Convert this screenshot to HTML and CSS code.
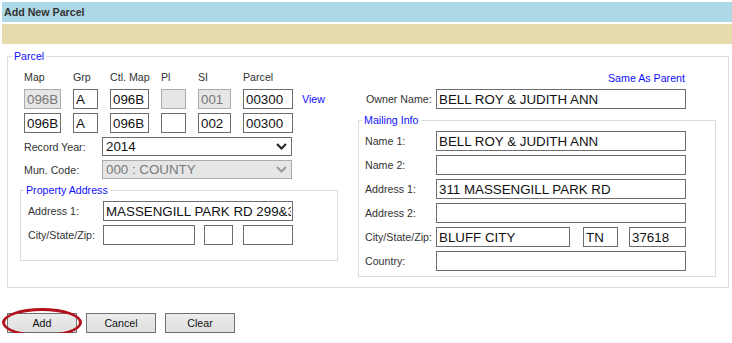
FILE: index.html
```html
<!DOCTYPE html>
<html>
<head>
<meta charset="utf-8">
<link rel="stylesheet" href="styles.css">
</head>
<body>
<div class="title">Add New Parcel</div>
<div class="band"></div>
<fieldset class="parcel">
  <legend>Parcel</legend>
  <div class="cols">
    <div class="left">
      <div class="idgrid">
        <span class="hd">Map</span><span class="hd">Grp</span><span class="hd">Ctl. Map</span><span class="hd">Pl</span><span class="hd">SI</span><span class="hd">Parcel</span><span></span>
        <input class="inp dis w-map" value="096B" disabled>
        <input class="inp w-grp" value="A">
        <input class="inp w-ctl" value="096B">
        <input class="inp dis w-pl" value="" disabled>
        <input class="inp dis w-si" value="001" disabled>
        <input class="inp w-par" value="00300">
        <a class="link view">View</a>
        <input class="inp w-map" value="096B">
        <input class="inp w-grp" value="A">
        <input class="inp w-ctl" value="096B">
        <input class="inp w-pl" value="">
        <input class="inp w-si" value="002">
        <input class="inp w-par" value="00300">
        <span></span>
      </div>
      <div class="srow first">
        <span class="lbl w78">Record Year:</span>
        <div class="sel">
          <select class="select"><option>2014</option></select>
          <svg class="chev" width="11" height="7" viewBox="0 0 11 7"><path d="M1 1 L5.5 5.5 L10 1" fill="none" stroke="#222" stroke-width="2"/></svg>
        </div>
      </div>
      <div class="srow">
        <span class="lbl w78">Mun. Code:</span>
        <div class="sel">
          <select class="select dis" disabled><option>000 : COUNTY</option></select>
          <svg class="chev" width="11" height="7" viewBox="0 0 11 7"><path d="M1 1 L5.5 5.5 L10 1" fill="none" stroke="#9a9a9a" stroke-width="2"/></svg>
        </div>
      </div>
      <fieldset class="sub prop">
        <legend>Property Address</legend>
        <div class="frow">
          <span class="lbl w75">Address 1:</span>
          <input class="inp w190" value="MASSENGILL PARK RD 299&amp;301">
        </div>
        <div class="frow">
          <span class="lbl w75">City/State/Zip:</span>
          <input class="inp w92" value="">
          <input class="inp w29 ml9" value="">
          <input class="inp w50 ml10" value="">
        </div>
      </fieldset>
    </div>
    <div class="right">
      <div class="same"><a class="link">Same As Parent</a></div>
      <div class="frow owner">
        <span class="lbl w70">Owner Name:</span>
        <input class="inp w250" value="BELL ROY &amp; JUDITH ANN">
      </div>
      <fieldset class="sub mail">
        <legend>Mailing Info</legend>
        <div class="frow">
          <span class="lbl w71">Name 1:</span>
          <input class="inp w250" value="BELL ROY &amp; JUDITH ANN">
        </div>
        <div class="frow">
          <span class="lbl w71">Name 2:</span>
          <input class="inp w250" value="">
        </div>
        <div class="frow">
          <span class="lbl w71">Address 1:</span>
          <input class="inp w250" value="311 MASSENGILL PARK RD">
        </div>
        <div class="frow">
          <span class="lbl w71">Address 2:</span>
          <input class="inp w250" value="">
        </div>
        <div class="frow">
          <span class="lbl w71">City/State/Zip:</span>
          <input class="inp w134" value="BLUFF CITY">
          <input class="inp w35 ml13" value="TN">
          <input class="inp w57 ml11" value="37618">
        </div>
        <div class="frow">
          <span class="lbl w71">Country:</span>
          <input class="inp w250" value="">
        </div>
      </fieldset>
    </div>
  </div>
</fieldset>
<div class="buttons">
  <div class="btnwrap">
    <button class="btn">Add</button>
    <span class="ring"></span>
  </div>
  <button class="btn">Cancel</button>
  <button class="btn">Clear</button>
</div>
</body>
</html>
```

FILE: styles.css
```css
* { box-sizing: border-box; }
body {
  margin: 0;
  font-family: "Liberation Sans", Arial, sans-serif;
  font-size: 10.67px;
  color: #333;
  background: #fff;
}
.title {
  margin: 2px 0 0 2px;
  height: 20px;
  line-height: 20px;
  padding-left: 2px;
  background: #add8e6;
  font-weight: bold;
  font-size: 10.67px;
  color: #333;
}
.band {
  margin: 2px 0 0 2px;
  height: 20px;
  background: #e6dbad;
}
fieldset {
  border: 1px solid #dcdcdc;
  margin: 0;
  min-width: 0;
}
legend {
  margin-left: 3px;
  padding: 0 2px;
  color: #1010ff;
  font-size: 10.67px;
  line-height: 12px;
}
.parcel {
  margin: 6px 3px 0 7px;
  padding: 0 12px 10px 12px;
}
.parcel > legend { margin-left: -8px; }
.prop > legend { margin-left: -4px; }
.mail > legend { margin-left: -3px; }
.cols {
  display: flex;
  align-items: flex-start;
}
.left {
  width: 318px;
  padding-top: 9px;
}
.right {
  width: 358px;
  margin-left: 20px;
  padding-top: 10px;
}
.idgrid {
  margin-left: 4px;
  display: grid;
  grid-template-columns: 49px 37px 51px 37px 45px 50px auto;
  grid-template-rows: 14px 20px 20px;
  row-gap: 4px;
}
.hd {
  line-height: 12px;
  color: #333;
}
.inp {
  height: 20px;
  border: 1px solid #6e6e6e;
  border-radius: 0;
  padding: 0 1px 0 2px;
  margin: 0;
  font-family: "Liberation Sans", Arial, sans-serif;
  font-size: 13.33px;
  color: #111;
  background: #fff;
  outline: none;
}
.inp.dis {
  background: #e6e6e6;
  border-color: #ababab;
  color: #777;
}
.w-map { width: 37px; }
.w-grp { width: 25px; }
.w-ctl { width: 39px; }
.w-pl { width: 25px; }
.w-si { width: 33px; }
.w-par { width: 50px; }
.link {
  color: #1010ff;
  text-decoration: none;
  font-size: 10.67px;
  line-height: 12px;
}
.view {
  align-self: center;
  margin-left: 9px;
}
.srow {
  margin-left: 4px;
  display: flex;
  align-items: center;
  height: 19px;
  margin-top: 4px;
}
.lbl {
  flex: none;
  color: #333;
}
.w78 { width: 78px; }
.w75 { width: 75px; }
.w71 { width: 71px; }
.w70 { width: 70px; }
.sel {
  position: relative;
  width: 190px;
  height: 19px;
}
.select {
  appearance: none;
  -webkit-appearance: none;
  width: 190px;
  height: 19px;
  border: 1px solid #6e6e6e;
  border-radius: 0;
  background: #fff;
  padding: 0 0 0 3px;
  margin: 0;
  font-family: "Liberation Sans", Arial, sans-serif;
  font-size: 13.33px;
  color: #111;
}
.select.dis {
  background: #e6e6e6;
  border-color: #ababab;
  color: #7a7a7a;
  opacity: 1;
}
.chev {
  position: absolute;
  right: 5px;
  top: 6px;
  pointer-events: none;
}
.sub {
  padding: 5px 0 15px 7px;
}
.prop {
  margin-top: 5px;
}
.frow {
  display: flex;
  align-items: center;
}
.prop .frow + .frow { margin-top: 4px; }
.w190 { width: 190px; }
.w92 { width: 92px; }
.w29 { width: 29px; }
.w50 { width: 50px; }
.w250 { width: 250px; }
.w134 { width: 134px; }
.w35 { width: 35px; }
.w57 { width: 57px; }
.ml9 { margin-left: 9px; }
.ml10 { margin-left: 10px; }
.ml11 { margin-left: 11px; }
.ml13 { margin-left: 13px; }
.same {
  text-align: right;
  padding-right: 31px;
  line-height: 12px;
  height: 12px;
}
.owner {
  margin-top: 5px;
  padding-left: 8px;
}
.mail {
  margin-top: 5px;
  padding: 5px 0 5px 6px;
}
.mail .frow + .frow { margin-top: 4px; }
.buttons {
  display: flex;
  gap: 9px;
  margin: 25px 0 0 7px;
}
.btnwrap {
  position: relative;
  display: flex;
}
.btn {
  width: 70px;
  height: 20px;
  margin: 0;
  padding: 0;
  border: 1px solid #707070;
  border-radius: 0;
  background: linear-gradient(#ececec, #dfdfdf);
  font-family: "Liberation Sans", Arial, sans-serif;
  font-size: 10.67px;
  color: #111;
}
.ring {
  position: absolute;
  left: -5px;
  top: -5px;
  width: 80px;
  height: 29px;
  border: 3px solid #b3111c;
  border-radius: 50%;
  pointer-events: none;
}
```
